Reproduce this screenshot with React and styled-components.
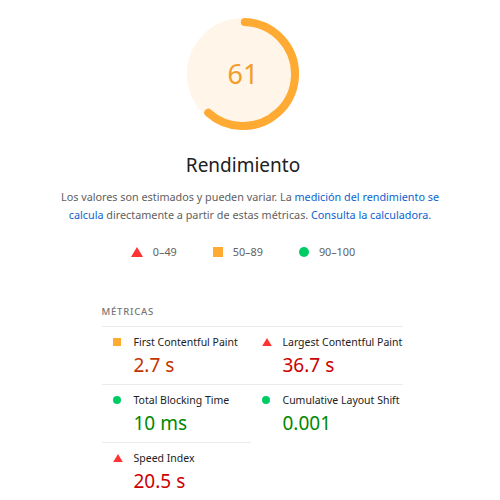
import React from "react";
import styled, { createGlobalStyle } from "styled-components";

const GlobalStyle = createGlobalStyle`
  body {
    margin: 0;
    background: #fff;
    font-family: "Noto Sans", "Open Sans", sans-serif;
    color: #212121;
  }
`;

const COLORS = {
  fail: "#ff3333",
  average: "#ffaa33",
  pass: "#00cc66",
};

const VALUE_COLORS = {
  fail: "#cc0000",
  average: "#c33300",
  pass: "#008800",
};

const metrics = [
  { label: "First Contentful Paint", value: "2.7 s", rating: "average" },
  { label: "Largest Contentful Paint", value: "36.7 s", rating: "fail" },
  { label: "Total Blocking Time", value: "10 ms", rating: "pass" },
  { label: "Cumulative Layout Shift", value: "0.001", rating: "pass" },
  { label: "Speed Index", value: "20.5 s", rating: "fail" },
];

function Gauge({ score }) {
  const r = 52;
  const c = 2 * Math.PI * r;
  return (
    <svg width="112" height="112" viewBox="0 0 112 112">
      <circle cx="56" cy="56" r="56" fill="#fff5e8" />
      <circle
        cx="56"
        cy="56"
        r={r}
        fill="none"
        stroke={COLORS.average}
        strokeWidth="8"
        strokeLinecap="round"
        strokeDasharray={`${(score / 100) * c} ${c}`}
        transform="rotate(-88 56 56)"
      />
    </svg>
  );
}

function RatingIcon({ rating, size = 10 }) {
  if (rating === "fail") {
    return (
      <svg width={size + 2} height={size} viewBox="0 0 12 10">
        <polygon points="6,0 12,10 0,10" fill={COLORS.fail} />
      </svg>
    );
  }
  if (rating === "average") {
    return (
      <svg width={size} height={size} viewBox="0 0 10 10">
        <rect width="10" height="10" fill={COLORS.average} />
      </svg>
    );
  }
  return (
    <svg width={size} height={size} viewBox="0 0 10 10">
      <circle cx="5" cy="5" r="5" fill={COLORS.pass} />
    </svg>
  );
}

export default function App() {
  return (
    <>
      <GlobalStyle />
      <Page>
        <GaugeWrap>
          <Gauge score={61} />
          <Score>61</Score>
        </GaugeWrap>
        <Title>Rendimiento</Title>
        <Description>
          <Line>
            Los valores son estimados y pueden variar. La{" "}
            <Link>medición del rendimiento se</Link>
          </Line>
          <Line>
            <Link>calcula</Link> directamente a partir de estas métricas.{" "}
            <Link>Consulta la calculadora.</Link>
          </Line>
        </Description>
        <Legend>
          <LegendItem>
            <RatingIcon rating="fail" size={10} />
            0–49
          </LegendItem>
          <LegendItem>
            <RatingIcon rating="average" size={10} />
            50–89
          </LegendItem>
          <LegendItem>
            <RatingIcon rating="pass" size={10} />
            90–100
          </LegendItem>
        </Legend>
        <Metrics>
          <MetricsHeader>Métricas</MetricsHeader>
          <MetricGrid>
            {metrics.map((m) => (
              <Metric key={m.label}>
                <MetricIcon>
                  <RatingIcon rating={m.rating} size={8} />
                </MetricIcon>
                <MetricBody>
                  <MetricLabel>{m.label}</MetricLabel>
                  <MetricValue $rating={m.rating}>{m.value}</MetricValue>
                </MetricBody>
              </Metric>
            ))}
          </MetricGrid>
        </Metrics>
      </Page>
    </>
  );
}

const Page = styled.div`
  width: 500px;
  padding-top: 18px;
  display: flex;
  flex-direction: column;
  align-items: center;
`;

const GaugeWrap = styled.div`
  position: relative;
  width: 112px;
  height: 112px;
  margin-left: -14px;
  svg {
    display: block;
  }
`;

const Score = styled.div`
  position: absolute;
  inset: 0;
  display: flex;
  align-items: center;
  justify-content: center;
  font-size: 27px;
  color: #f29d2a;
  padding-bottom: 1px;
`;

const Title = styled.div`
  margin-top: 23px;
  margin-left: -14px;
  font-size: 19px;
  line-height: 24px;
  color: #212121;
`;

const Description = styled.div`
  margin-top: 11px;
  display: flex;
  flex-direction: column;
  align-items: center;
  font-size: 10.8px;
  line-height: 18px;
  color: #616161;
`;

const Line = styled.div`
  white-space: nowrap;
`;

const Link = styled.span`
  color: #0b63ce;
`;

const Legend = styled.div`
  margin-top: 19px;
  margin-left: -14px;
  display: flex;
  gap: 36px;
`;

const LegendItem = styled.div`
  display: flex;
  align-items: center;
  gap: 10px;
  font-size: 10.8px;
  line-height: 18px;
  color: #616161;
`;

const Metrics = styled.div`
  margin-top: 44px;
  margin-left: 4px;
  width: 301px;
`;

const MetricsHeader = styled.div`
  font-size: 9.5px;
  line-height: 14px;
  letter-spacing: 0.8px;
  text-transform: uppercase;
  color: #757575;
  font-weight: 500;
  margin-bottom: 7px;
`;

const MetricGrid = styled.div`
  display: grid;
  grid-template-columns: 149px 152px;
`;

const Metric = styled.div`
  display: flex;
  border-top: 1px solid #ebebeb;
  padding: 5px 0 6px 11px;
`;

const MetricIcon = styled.div`
  width: 21px;
  height: 20px;
  display: flex;
  align-items: center;
  flex-shrink: 0;
`;

const MetricBody = styled.div`
  display: flex;
  flex-direction: column;
`;

const MetricLabel = styled.div`
  font-size: 10.5px;
  line-height: 20px;
  color: #212121;
  white-space: nowrap;
`;

const MetricValue = styled.div`
  font-size: 19px;
  line-height: 26px;
  color: ${(p) => VALUE_COLORS[p.$rating]};
`;
